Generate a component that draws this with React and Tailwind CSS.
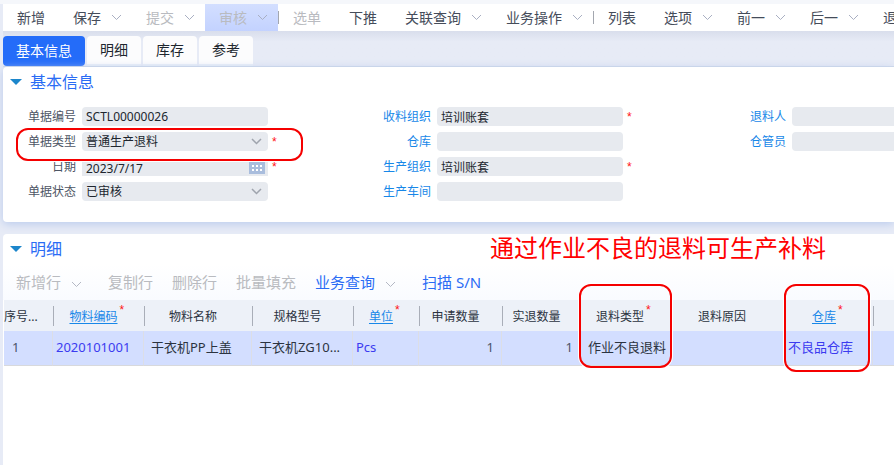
import { useState } from "react";
import { clsx } from "clsx";

const toolbar = [
  { label: "新增" },
  { label: "保存", menu: true },
  { label: "提交", menu: true, disabled: true },
  { label: "审核", menu: true, disabled: true, active: true },
  { divider: true },
  { label: "选单", disabled: true },
  { label: "下推" },
  { label: "关联查询", menu: true },
  { label: "业务操作", menu: true },
  { divider: true },
  { label: "列表" },
  { label: "选项", menu: true },
  { label: "前一", menu: true },
  { label: "后一", menu: true },
  { label: "退出" },
];

const tabs = ["基本信息", "明细", "库存", "参考"];

const formColumns = [
  [
    { id: "billNo", label: "单据编号", value: "SCTL00000026" },
    { id: "billType", label: "单据类型", value: "普通生产退料", type: "select", required: true, marked: true },
    { id: "date", label: "日期", value: "2023/7/17", type: "date", required: true },
    { id: "status", label: "单据状态", value: "已审核", type: "select" },
  ],
  [
    { id: "stockOrg", label: "收料组织", value: "培训账套", link: true, required: true },
    { id: "stock", label: "仓库", value: "", link: true },
    { id: "prdOrg", label: "生产组织", value: "培训账套", link: true, required: true },
    { id: "workshop", label: "生产车间", value: "", link: true },
  ],
  [
    { id: "returner", label: "退料人", value: "", link: true },
    { id: "stocker", label: "仓管员", value: "", link: true },
  ],
];

const detailActions = [
  { label: "新增行", menu: true, disabled: true },
  { label: "复制行", disabled: true },
  { label: "删除行", disabled: true },
  { label: "批量填充", disabled: true },
  { label: "业务查询", menu: true },
  { label: "扫描 S/N" },
];

const columns = [
  { key: "seq", title: "序号...", width: "w-[49px]", plain: true },
  { key: "code", title: "物料编码", width: "w-[91px]", link: true, required: true },
  { key: "name", title: "物料名称", width: "w-[108px]" },
  { key: "spec", title: "规格型号", width: "w-[101px]" },
  { key: "unit", title: "单位", width: "w-[66px]", link: true, required: true },
  { key: "applyQty", title: "申请数量", width: "w-[83px]" },
  { key: "realQty", title: "实退数量", width: "w-[79px]", noLine: true },
  { key: "type", title: "退料类型", width: "w-[88px]", required: true, noLine: true, mark: "-left-0.5 w-[93px] h-[84px]" },
  { key: "reason", title: "退料原因", width: "w-[116px]", noLine: true },
  { key: "stock", title: "仓库", width: "w-[88px]", link: true, required: true, mark: "-left-px w-[86px] h-[88px]" },
];

const rows = [
  {
    seq: "1",
    code: "2020101001",
    name: "干衣机PP上盖",
    spec: "干衣机ZG10...",
    unit: "Pcs",
    applyQty: "1",
    realQty: "1",
    type: "作业不良退料",
    reason: "",
    stock: "不良品仓库",
  },
];

const cellClass = {
  seq: "pl-2 text-[#4b5468]",
  code: "pl-[3px] text-[#3b3bf0]",
  name: "pl-[7px]",
  spec: "pl-[7px]",
  unit: "pl-[3px] text-[#3b3bf0]",
  applyQty: "pr-[7px] text-right text-[#4b5468]",
  realQty: "pr-[7px] text-right text-[#4b5468]",
  type: "pl-[7px]",
  reason: "",
  stock: "pl-[3px] text-[#3b3bf0]",
};

function Chevron({ className, strokeWidth = 1 }) {
  return (
    <svg
      viewBox="0 0 11 7"
      fill="none"
      stroke="currentColor"
      strokeWidth={strokeWidth}
      className={clsx("h-[7px] w-[11px] shrink-0", className)}
    >
      <path d="M1 1 5.5 5.5 10 1" />
    </svg>
  );
}

function CalendarIcon() {
  return (
    <svg viewBox="0 0 16 13" className="pointer-events-none absolute right-[3px] bottom-0.5 h-[13px] w-4">
      <path fill="#a9bddd" d="M0 1h16v12H0zM0 0h2v1H0zM5 0h6v1H5zM14 0h2v1h-2z" />
      <path fill="#e7eaef" d="M2 0h3v1H2zM11 0h3v1h-3z" />
      <path fill="#fff" d="M3 4h2v2H3zM7 4h2v2H7zM11 4h2v2h-2zM3 8h2v2H3zM7 8h2v2H7zM11 8h2v2h-2z" />
    </svg>
  );
}

function Star({ className }) {
  return <span className={clsx("font-['Liberation_Sans',sans-serif] text-xs text-[#ff1414]", className)}>*</span>;
}

function Field({ field }) {
  const { id, label, value, type, link, required, marked } = field;
  const control = "block w-full bg-[#e7eaef] px-1 text-xs text-[#20262e] outline-none";
  return (
    <div className="relative flex h-[19px] items-center">
      <label
        htmlFor={id}
        className={clsx("w-[73px] shrink-0 text-right text-xs", link ? "text-[#1787e8]" : "text-[#4d5564]")}
      >
        {label}
      </label>
      <div className={clsx("relative ml-1.5 w-[186px] shrink-0", type === "date" && "self-end")}>
        {type === "select" ? (
          <>
            <select id={id} defaultValue={value} className={clsx(control, "h-[19px] appearance-none rounded")}>
              <option>{value}</option>
            </select>
            <Chevron strokeWidth={1.5} className="pointer-events-none absolute top-1.5 right-1.5 text-[#9fa4ad]" />
          </>
        ) : (
          <input
            id={id}
            type="text"
            readOnly
            value={value}
            className={clsx(control, type === "date" ? "h-[15px]" : "h-[19px] rounded")}
          />
        )}
        {type === "date" && <CalendarIcon />}
      </div>
      {required && <Star className="ml-1" />}
      {marked && (
        <div className="pointer-events-none absolute -top-1 left-[13px] z-10 h-[33px] w-[287px] rounded-xl border-2 border-[#f50000] shadow-[0_0_0_1px_white]" />
      )}
    </div>
  );
}

function SectionTitle({ children }) {
  return (
    <h2 className="flex h-[30px] items-center gap-2 pl-[7px] text-base text-[#2a6cf5]">
      <svg viewBox="0 0 12 6" className="h-1.5 w-3">
        <path fill="#1c86cb" d="M0 0h12L6 6z" />
      </svg>
      {children}
    </h2>
  );
}

export default function App() {
  const [tab, setTab] = useState("基本信息");

  return (
    <div className="flex min-h-screen flex-col overflow-hidden bg-[#e7ebf6] pl-[3px] font-['Noto_Sans','Noto_Sans_CJK_SC',sans-serif] text-[#2b3340]">
      <div className="-ml-[3px] h-1 bg-[#f5f7fb]" />

      <div className="flex h-[27px] items-stretch overflow-hidden bg-white text-sm whitespace-nowrap">
        {toolbar.map((item, i) =>
          item.divider ? (
            <span key={i} className="my-[7px] w-px shrink-0 bg-[#a3a7af]" />
          ) : (
            <button
              key={i}
              disabled={item.disabled}
              className={clsx(
                "flex shrink-0 items-center gap-2.5 pl-3.5",
                item.menu ? "pr-2.5" : "pr-3.5",
                item.disabled ? "text-[#b9bbc0]" : "text-[#454c5a]",
                item.active && "bg-linear-to-b from-[#d3dfff] to-[#c3d2ff]"
              )}
            >
              {item.label}
              {item.menu && <Chevron className="text-[#a9afc2]" />}
            </button>
          )
        )}
      </div>

      <div className="flex h-9 items-end gap-0.5 border-b border-[#d0daea] bg-linear-to-b from-[#d9deec] to-[#e7ebf6] to-30% text-sm">
        {tabs.map((t) => (
          <button
            key={t}
            onClick={() => setTab(t)}
            className={clsx(
              "h-[30px] rounded-t px-[13px]",
              t === tab ? "rounded-b bg-[#246cf9] text-white" : "border-b-2 border-[#eaf0f8] bg-[#fcfcfd] text-[#20262e]"
            )}
          >
            {t}
          </button>
        ))}
      </div>

      <section className="rounded-l bg-white pb-[21px] shadow-[0_2px_10px_#b9caec]">
        <SectionTitle>基本信息</SectionTitle>
        <div className="flex overflow-hidden pt-2.5">
          {formColumns.map((fields, i) => (
            <div key={i} className="flex w-[355px] shrink-0 flex-col gap-1.5">
              {fields.map((f) => (
                <Field key={f.id} field={f} />
              ))}
            </div>
          ))}
        </div>
      </section>

      <section className="relative mt-3 grow rounded-tl bg-white">
        <SectionTitle>明细</SectionTitle>
        <p className="absolute top-0 left-[487px] text-2xl leading-7 whitespace-nowrap text-[#ff0000]">
          通过作业不良的退料可生产补料
        </p>
        <div className="flex h-9 items-center bg-linear-to-b from-white to-[#f9fbff] pl-[13px] text-[15px]">
          {detailActions.map((a) => (
            <button
              key={a.label}
              disabled={a.disabled}
              className={clsx(
                "flex items-center gap-2.5",
                a.menu ? "mr-[26px]" : "mr-[19px]",
                a.disabled ? "text-[#b9bbc0]" : "text-[#2a6cf5]"
              )}
            >
              {a.label}
              {a.menu && <Chevron className="mt-1 text-[#b4b8c4]" />}
            </button>
          ))}
        </div>

        <div className="pl-px">
          <table className="w-full table-fixed border-separate border-spacing-0 whitespace-nowrap">
            <thead>
              <tr className="h-[31px] bg-[#edf1f8] text-xs">
                {columns.map((c) => (
                  <th
                    key={c.key}
                    className={clsx("relative p-0 pt-0.5 font-normal", c.width, c.plain ? "text-left" : "pr-2.5")}
                  >
                    <span className="relative">
                      {c.link ? (
                        <a href="#" className="text-[#1787e8] underline underline-offset-2">{c.title}</a>
                      ) : (
                        c.title
                      )}
                      {c.required && <Star className="absolute -top-1.5 left-full pl-0.5" />}
                    </span>
                    {!c.noLine && <i className="absolute top-1.5 -right-px h-5 w-px bg-[#a9aeb8]" />}
                    {c.mark && (
                      <div
                        className={clsx(
                          "pointer-events-none absolute -top-4 z-10 rounded-xl border-2 border-[#f50000] shadow-[0_0_0_1px_white]",
                          c.mark
                        )}
                      />
                    )}
                  </th>
                ))}
                <th />
              </tr>
            </thead>
            <tbody>
              {rows.map((row) => (
                <tr key={row.seq} className="h-[35px] bg-[#d3deff] text-[13px]">
                  {columns.map((c) => (
                    <td
                      key={c.key}
                      className={clsx(
                        "border-r border-b border-b-[#d8d9dc] py-0",
                        c.noLine ? "border-r-transparent" : "border-r-[#dcdee6]",
                        cellClass[c.key]
                      )}
                    >
                      {row[c.key]}
                    </td>
                  ))}
                  <td className="border-b border-[#d8d9dc]" />
                </tr>
              ))}
            </tbody>
          </table>
        </div>
      </section>
    </div>
  );
}
